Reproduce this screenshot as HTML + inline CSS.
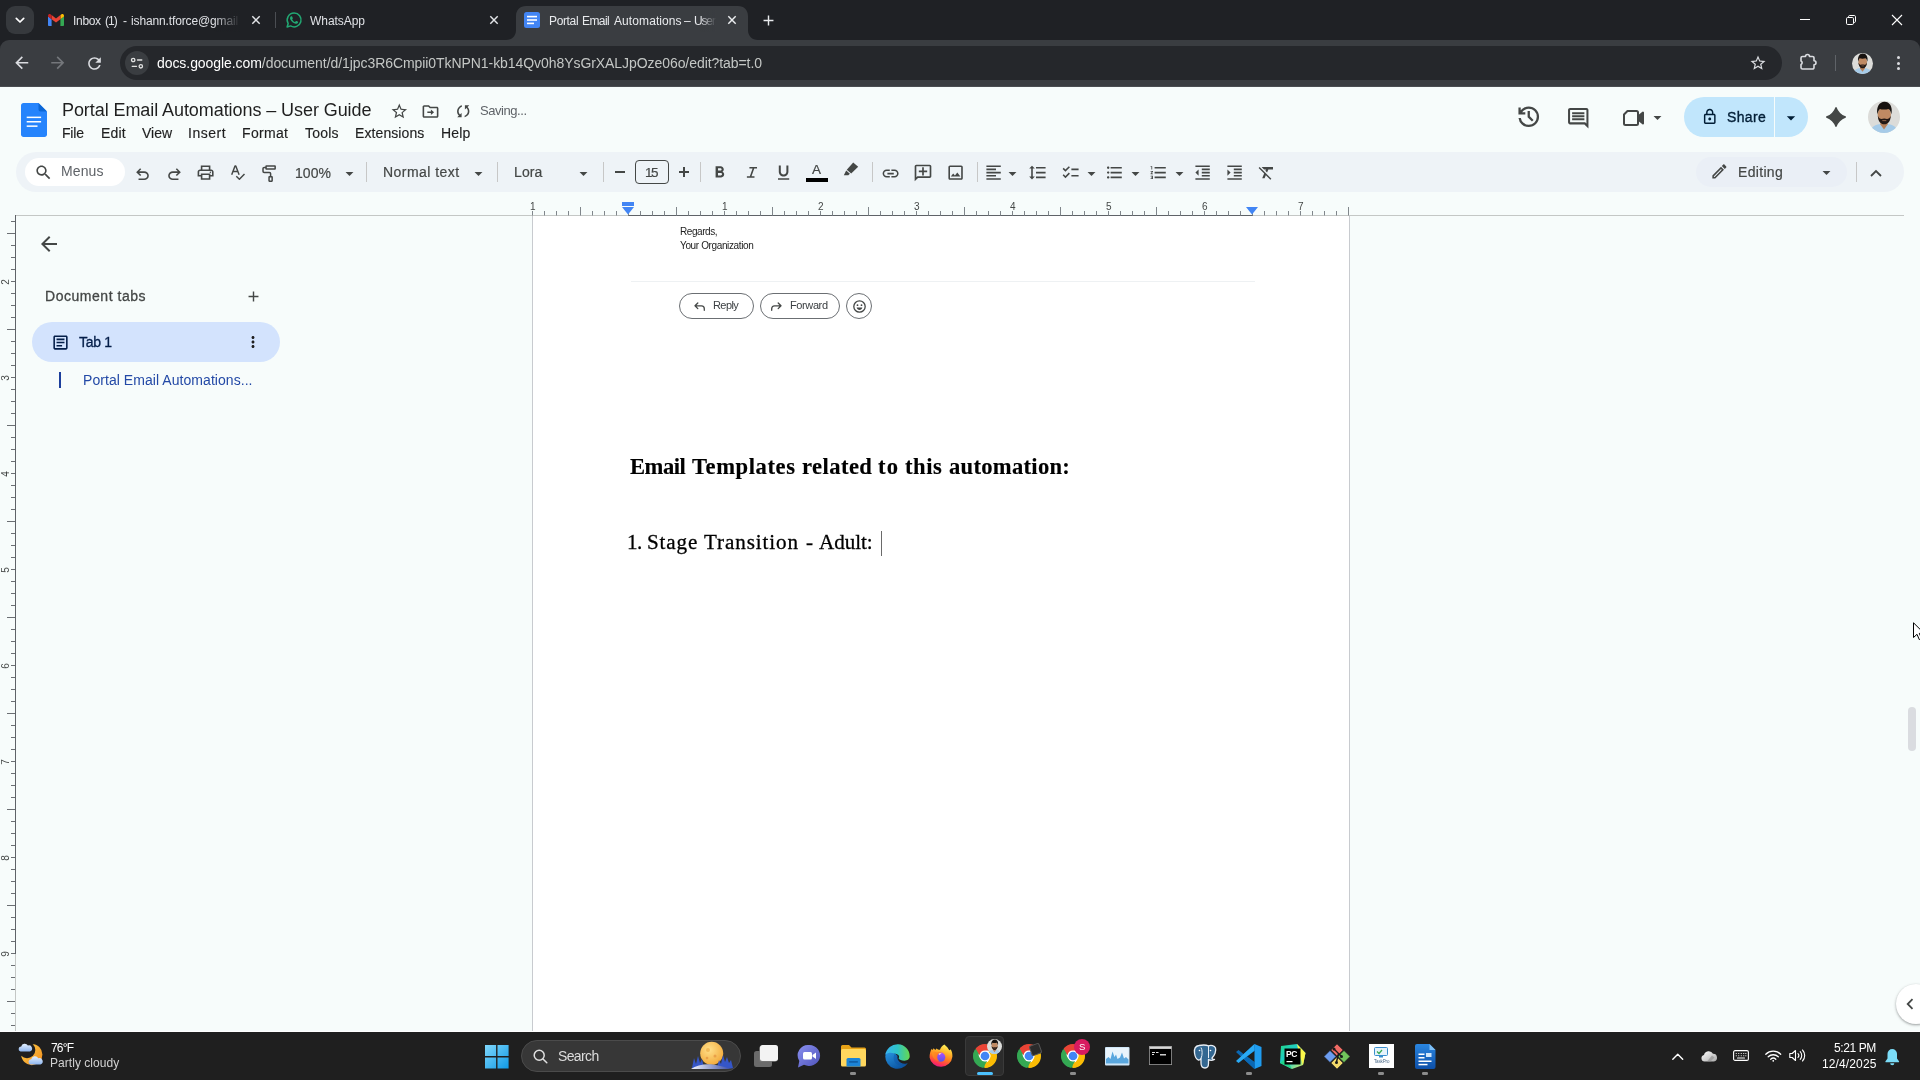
<!DOCTYPE html>
<html>
<head>
<meta charset="utf-8">
<title>Portal Email Automations – User Guide</title>
<style>
*{box-sizing:border-box;margin:0;padding:0}
html,body{width:1920px;height:1080px;overflow:hidden;background:#f7fcfb;font-family:"Liberation Sans",sans-serif;}
.abs{position:absolute}
svg{position:absolute;display:block;overflow:visible}
.t{position:absolute;white-space:nowrap;line-height:1;will-change:transform}
/* chrome */
#tabstrip{left:0;top:0;width:1920px;height:40px;background:#1f2125}
#cbar{left:0;top:40px;width:1920px;height:46px;background:#3a3d41}
#cline{left:0;top:86px;width:1920px;height:1px;background:#4a4d51}
#omni{left:120px;top:46px;width:1662px;height:34px;border-radius:17px;background:#25272b}
/* docs */
#docsbg{left:0;top:87px;width:1920px;height:945px;background:#f7fcfb}
#pill{left:15.5px;top:152px;width:1888.5px;height:40px;border-radius:20px;background:#eef3f7}
#menus{left:25px;top:158px;width:100px;height:28px;border-radius:14px;background:#fff}
.mi{color:#1f1f1f;font-size:15px;top:126px}
.tb{fill:#444746}
.sep{position:absolute;top:162px;width:1px;height:20px;background:#c7c7c7}
.tt{color:#444746;font-size:15px;top:165px}
/* page */
#page{left:532px;top:216px;width:818px;height:816px;background:#fff;border-left:1px solid #c8cbcf;border-right:1px solid #c8cbcf}
/* taskbar */
#taskbar{left:0;top:1032px;width:1920px;height:48px;background:#1f1f1f}
</style>
</head>
<body>
<!-- ===== Chrome frame ===== -->
<div id="tabstrip" class="abs"></div>
<div id="cbar" class="abs"></div>
<div id="cline" class="abs"></div>
<div id="omni" class="abs"></div>
<div class="abs" style="left:0px;top:40px;width:10px;height:10px;background:#1f2125;"></div>
<div class="abs" style="left:0px;top:40px;width:20px;height:20px;background:#3a3d41;border-radius:9px 0 0 0"></div>
<div class="abs" style="left:1910px;top:40px;width:10px;height:10px;background:#1f2125;"></div>
<div class="abs" style="left:1900px;top:40px;width:20px;height:20px;background:#3a3d41;border-radius:0 9px 0 0"></div>
<div class="abs" style="left:6px;top:6px;width:28px;height:28px;background:#36393d;border-radius:9px"></div>
<svg style="left:14px;top:14px" width="12" height="12" viewBox="0 0 12 12" fill="none" stroke="#fff" stroke-width="1.7" stroke-linecap="round" stroke-linejoin="round"><path d="M2.3 4.3 6 8 9.7 4.3"/></svg>
<svg style="left:48px;top:14px" width="16" height="12" viewBox="0 0 16 12">
<path d="M0 2.2v8.7c0 .6.5 1.1 1.1 1.1h2.5V5.3z" fill="#4285f4"/>
<path d="M12.4 12h2.5c.6 0 1.1-.5 1.1-1.100V2.200l-3.600 3.100z" fill="#34a853"/>
<path d="M12.4 1.100v4.200l3.600-2.700V1.700c0-1.400-1.600-2.200-2.700-1.300z" fill="#fbbc04"/>
<path d="M3.600 5.300V1.100L8 4.400l4.400-3.300v4.200L8 8.600z" fill="#ea4335"/>
<path d="M0 1.700v.9l3.600 2.700V1.100L2.700.4C1.600-.5 0 .3 0 1.700z" fill="#c5221f"/>
</svg>
<span class="t" style="left:72.90px;top:14.54px;font-size:12px;color:#dfe1e5;letter-spacing:-0.315px;">Inbox</span>
<span class="t" style="left:105.20px;top:14.54px;font-size:12px;color:#dfe1e5;letter-spacing:-0.936px;">(1)</span>
<span class="t" style="left:123.20px;top:14.54px;font-size:12px;color:#dfe1e5;">-</span>
<span class="t" style="left:130.50px;top:14.54px;font-size:12px;color:#dfe1e5;letter-spacing:-0.132px;">ishann.tforce@gmail</span>
<div class="abs" style="left:214px;top:10px;width:26px;height:22px;background:linear-gradient(90deg,rgba(31,33,37,0),#1f2125)"></div>
<svg style="left:252px;top:16.3px" width="8" height="8" viewBox="0 0 8 8" fill="none" stroke="#e3e5e8" stroke-width="1.450"><path d="M.3.300 7.700 7.700M7.700.300.300 7.700"/></svg>
<div class="abs" style="left:275px;top:12px;width:1px;height:16px;background:#4b4e53;"></div>
<svg style="left:286px;top:12px" width="16" height="16" viewBox="0 0 16 16">
<path d="M8.100 1.100A6.900 6.900 0 0 0 2.200 11.600L1.100 15 4.600 13.900A6.900 6.900 0 1 0 8.100 1.100Z" fill="none" stroke="#22a873" stroke-width="1.500" stroke-linejoin="round"/>
<path d="M6.100 4.600c-.15-.33-.3-.34-.45-.34h-.38c-.13 0-.35.050-.53.250-.18.200-.7.680-.7 1.660s.71 1.930.81 2.060c.1.130 1.380 2.200 3.400 3 1.680.66 2.020.53 2.390.5.360-.040 1.170-.480 1.340-.940.160-.460.160-.860.110-.940-.050-.080-.180-.130-.380-.230s-1.170-.580-1.350-.640c-.18-.070-.310-.100-.440.100s-.510.640-.620.770c-.110.130-.230.150-.430.050s-.840-.310-1.590-.980c-.590-.520-.990-1.170-1.100-1.370-.110-.2-.010-.3.090-.400.090-.090.200-.230.300-.350.100-.120.130-.2.200-.330.070-.130.030-.250-.020-.350-.050-.100-.430-1.100-.610-1.500z" fill="#22a873"/>
</svg>
<span class="t" style="left:310.00px;top:14.54px;font-size:12px;color:#dfe1e5;letter-spacing:-0.051px;">WhatsApp</span>
<svg style="left:490px;top:16.3px" width="8" height="8" viewBox="0 0 8 8" fill="none" stroke="#e3e5e8" stroke-width="1.450"><path d="M.3.300 7.700 7.700M7.700.300.300 7.700"/></svg>
<svg style="left:506px;top:6px" width="252" height="34" viewBox="0 0 252 34"><path d="M0 34 C6 34 10 30 10 24 L10 10 C10 4 14 0 20 0 L232 0 C238 0 242 4 242 10 L242 24 C242 30 246 34 252 34 Z" fill="#3a3d41"/></svg>
<svg style="left:524px;top:12px" width="16" height="16" viewBox="0 0 16 16"><rect width="16" height="16" rx="2.500" fill="#4285f4"/><rect x="3" y="3.800" width="10" height="1.600" fill="#fff"/><rect x="3" y="7.200" width="10" height="1.600" fill="#fff"/><rect x="3" y="10.600" width="7" height="1.600" fill="#fff"/></svg>
<span class="t" style="left:548.70px;top:14.54px;font-size:12px;color:#e8eaed;letter-spacing:-0.352px;">Portal</span>
<span class="t" style="left:582.10px;top:14.54px;font-size:12px;color:#e8eaed;letter-spacing:-0.579px;">Email</span>
<span class="t" style="left:613.50px;top:14.54px;font-size:12px;color:#e8eaed;letter-spacing:0.090px;">Automations</span>
<span class="t" style="left:684.40px;top:14.54px;font-size:12px;color:#e8eaed;">–</span>
<span class="t" style="left:694.40px;top:14.54px;font-size:12px;color:#e8eaed;letter-spacing:-1.148px;">User</span>
<div class="abs" style="left:700px;top:10px;width:20px;height:22px;background:linear-gradient(90deg,rgba(58,61,65,0),#3a3d41 80%)"></div>
<div class="abs" style="left:720px;top:10px;width:20px;height:22px;background:#3a3d41;"></div>
<svg style="left:728px;top:16.3px" width="8" height="8" viewBox="0 0 8 8" fill="none" stroke="#eceef0" stroke-width="1.450"><path d="M.3.300 7.700 7.700M7.700.300.300 7.700"/></svg>
<svg style="left:759.50px;top:11.50px" width="17" height="17" viewBox="0 0 24 24" fill="#e8eaed" ><path d="M19 13h-6v6h-2v-6H5v-2h6V5h2v6h6v2z"/></svg>
<div class="abs" style="left:1800px;top:19px;width:10px;height:1px;background:#fff;"></div>
<svg style="left:1846px;top:15px" width="10" height="10" viewBox="0 0 10 10" fill="none" stroke="#fff" stroke-width="1"><rect x=".5" y="2.500" width="7" height="7" rx="1.200"/><path d="M2.500 2.500V1.700C2.500 1 3 .5 3.700.5H8.300C9 .5 9.500 1 9.500 1.700V6.300C9.500 7 9 7.500 8.300 7.500H7.500"/></svg>
<svg style="left:1892px;top:15px" width="10" height="10" viewBox="0 0 10 10" fill="none" stroke="#fff" stroke-width="1.100"><path d="M0 0 10 10M10 0 0 10"/></svg>
<svg style="left:12.25px;top:53.25px" width="19.5" height="19.5" viewBox="0 0 24 24" fill="#dadce0" ><path d="M20 11H7.83l5.59-5.59L12 4l-8 8 8 8 1.41-1.41L7.83 13H20v-2z"/></svg>
<svg style="left:48.25px;top:53.25px" width="19.5" height="19.5" viewBox="0 0 24 24" fill="#74777b" ><path d="M12 4l-1.41 1.41L16.17 11H4v2h12.17l-5.58 5.59L12 20l8-8z"/></svg>
<svg style="left:84.50px;top:53.50px" width="19" height="19" viewBox="0 0 24 24" fill="#dadce0" ><path d="M17.65 6.35C16.2 4.9 14.21 4 12 4c-4.42 0-7.99 3.58-7.99 8s3.57 8 7.99 8c3.73 0 6.84-2.55 7.73-6h-2.08c-.82 2.33-3.04 4-5.65 4-3.31 0-6-2.69-6-6s2.69-6 6-6c1.66 0 3.14.69 4.22 1.78L13 11h7V4l-2.35 2.35z"/></svg>
<div class="abs" style="left:125px;top:51px;width:24px;height:24px;background:#3a3d41;border-radius:12px"></div>
<svg style="left:130px;top:56px" width="14" height="14" viewBox="0 0 14 14" fill="none" stroke="#e3e3e3" stroke-width="1.300" stroke-linecap="round"><circle cx="3.200" cy="4" r="1.700"/><path d="M7.500 4h4.300"/><circle cx="10.800" cy="10.300" r="1.700"/><path d="M2.200 10.300h4.300"/></svg>
<span class="t" style="left:157.00px;top:56.15px;font-size:14px;color:#c4c7c5;letter-spacing:-0.066px;"><span style="color:#fff">docs.google.com</span>/document/d/1jpc3R6Cmpii0TkNPN1-kb14Qv0h8YsGrXALJpOze06o/edit?tab=t.0</span>
<svg style="left:1748.70px;top:53.60px" width="18" height="18" viewBox="0 0 24 24" fill="#dadce0" ><path d="M22 9.24l-7.19-.62L12 2 9.19 8.63 2 9.24l5.46 4.73L5.82 21 12 17.27 18.18 21l-1.63-7.03L22 9.24zM12 15.4l-3.76 2.27 1-4.28-3.32-2.88 4.38-.38L12 6.1l1.71 4.04 4.38.38-3.32 2.88 1 4.28L12 15.4z"/></svg>
<svg style="left:1800.300px;top:53.300px" width="17" height="17" viewBox="0 0 17 17" fill="none" stroke="#dadce0" stroke-width="1.600" stroke-linejoin="round"><path d="M2.500 3.500H5.500A2 2 0 0 1 9.500 3.500H12.500A1.500 1.500 0 0 1 14 5V7.750A2 2 0 0 1 14 11.750V14.500A1.500 1.500 0 0 1 12.500 16H2.500A1.500 1.500 0 0 1 1 14.500V11.500A1.900 1.900 0 0 0 1 8V5A1.500 1.500 0 0 1 2.500 3.500Z"/></svg>
<div class="abs" style="left:1835px;top:55px;width:1px;height:16px;background:#5f6368;"></div>
<svg style="left:1851.5px;top:52.5px" width="21" height="21" viewBox="0 0 32 32"><defs><clipPath id="av1"><circle cx="16" cy="16" r="16"/></clipPath></defs><g clip-path="url(#av1)"><rect width="32" height="32" fill="#dcdcd9"/><path d="M2 32C2 26.500 7 24 11.500 23L16 27.500 20.500 23C25 24 30 26.500 30 32Z" fill="#a6cbe8"/><path d="M12.300 20H19.700V23.500L16 28.500 12.300 23.500Z" fill="#b5815c"/><ellipse cx="16.300" cy="13.800" rx="6.600" ry="8.200" fill="#c08a63"/><path d="M9.400 13.500C8 6 11.500 .8 16.500 .8S25 5.500 23.400 13.500C22.800 10.500 22 8.800 20.500 8 18 8.800 13.500 8.800 12 8 10.500 9 9.900 11 9.400 13.500Z" fill="#17120f"/><path d="M9.800 14.500C10 20.500 12.800 23.300 16.300 23.300S22.600 20.500 22.800 14.500C21.800 17.200 20.500 18 19 18 17.500 17.200 15 17.200 13.600 18 12 18 10.800 17.200 9.800 14.500Z" fill="#231915"/><path d="M14.300 19.600H18.300" stroke="#a87455" stroke-width=".8"/></g></svg>
<div class="abs" style="left:1896.500px;top:56.1px;width:3px;height:3px;border-radius:50%;background:#dadce0"></div>
<div class="abs" style="left:1896.500px;top:61.5px;width:3px;height:3px;border-radius:50%;background:#dadce0"></div>
<div class="abs" style="left:1896.500px;top:66.9px;width:3px;height:3px;border-radius:50%;background:#dadce0"></div>
<!-- ===== Docs ===== -->
<div id="docsbg" class="abs"></div>
<svg style="left:21px;top:103px" width="26" height="34" viewBox="0 0 26 34">
<path d="M2.500 0H17.500L26 8.500V31.500C26 32.900 24.900 34 23.500 34H2.500C1.100 34 0 32.900 0 31.500V2.500C0 1.100 1.100 0 2.500 0Z" fill="#2684fc"/>
<path d="M17.500 0 26 8.500H19.500C18.400 8.500 17.500 7.600 17.500 6.500Z" fill="#0c67d6"/>
<rect x="5.700" y="13.600" width="14.400" height="1.500" fill="#fff"/><rect x="5.700" y="18" width="14.400" height="1.500" fill="#fff"/><rect x="5.700" y="22.400" width="10.800" height="1.500" fill="#fff"/>
</svg>
<span class="t" style="left:61.50px;top:100.56px;font-size:18px;color:#1f1f1f;letter-spacing:-0.074px;">Portal Email Automations – User Guide</span>
<svg style="left:389.70px;top:101.70px" width="18.6" height="18.6" viewBox="0 0 24 24" fill="#444746" ><path d="M22 9.24l-7.19-.62L12 2 9.19 8.63 2 9.24l5.46 4.73L5.82 21 12 17.27 18.18 21l-1.63-7.03L22 9.24zM12 15.4l-3.76 2.27 1-4.28-3.32-2.88 4.38-.38L12 6.1l1.71 4.04 4.38.38-3.32 2.88 1 4.28L12 15.4z"/></svg>
<svg style="left:421.20px;top:101.50px" width="19" height="19" viewBox="0 0 24 24" fill="#444746" ><path d="M20 6h-8l-2-2H4c-1.1 0-2 .9-2 2v12c0 1.1.9 2 2 2h16c1.1 0 2-.9 2-2V8c0-1.1-.9-2-2-2zm0 12H4V6h5.17l2 2H20v10zm-7.5-1.5l4-3.5-4-3.5V12H8v2h4.5v2.5z"/></svg>
<svg style="left:453.75px;top:101.55px" width="18.5" height="18.5" viewBox="0 0 24 24" fill="#444746" transform="rotate(45)"><path d="M12 4V1L8 5l4 4V6c3.31 0 6 2.69 6 6 0 1.01-.25 1.97-.7 2.8l1.46 1.46C19.54 15.03 20 13.57 20 12c0-4.42-3.58-8-8-8zm0 14c-3.31 0-6-2.69-6-6 0-1.01.25-1.97.7-2.8L5.24 7.74C4.46 8.97 4 10.43 4 12c0 4.42 3.58 8 8 8v3l4-4-4-4v3z"/></svg>
<span class="t" style="left:480.00px;top:104.30px;font-size:13px;color:#5f6368;letter-spacing:-0.449px;">Saving...</span>
<span class="t" style="left:62.00px;top:125.85px;font-size:14px;color:#1f1f1f;letter-spacing:-0.188px;-webkit-text-stroke:.15px #1f1f1f;">File</span>
<span class="t" style="left:101.00px;top:125.85px;font-size:14px;color:#1f1f1f;letter-spacing:0.192px;-webkit-text-stroke:.15px #1f1f1f;">Edit</span>
<span class="t" style="left:142.00px;top:125.85px;font-size:14px;color:#1f1f1f;letter-spacing:-0.031px;-webkit-text-stroke:.15px #1f1f1f;">View</span>
<span class="t" style="left:188.30px;top:125.85px;font-size:14px;color:#1f1f1f;letter-spacing:0.537px;-webkit-text-stroke:.15px #1f1f1f;">Insert</span>
<span class="t" style="left:242.30px;top:125.85px;font-size:14px;color:#1f1f1f;letter-spacing:0.331px;-webkit-text-stroke:.15px #1f1f1f;">Format</span>
<span class="t" style="left:304.70px;top:125.85px;font-size:14px;color:#1f1f1f;letter-spacing:0.228px;-webkit-text-stroke:.15px #1f1f1f;">Tools</span>
<span class="t" style="left:355.00px;top:125.85px;font-size:14px;color:#1f1f1f;letter-spacing:0.091px;-webkit-text-stroke:.15px #1f1f1f;">Extensions</span>
<span class="t" style="left:441.00px;top:125.85px;font-size:14px;color:#1f1f1f;letter-spacing:0.168px;-webkit-text-stroke:.15px #1f1f1f;">Help</span>
<svg style="left:1515.15px;top:103.25px" width="27.5" height="27.5" viewBox="0 -960 960 960" fill="#444746"><path d="M480-120q-138 0-240.500-91.500T122-440h82q14 104 92.500 172T480-200q117 0 198.500-81.500T760-480q0-117-81.500-198.500T480-760q-69 0-129 32t-101 88h110v80H120v-240h80v94q51-64 124.500-99T480-840q75 0 140.500 28.500t114 77q48.500 48.500 77 114T840-480q0 75-28.500 140.500t-77 114q-48.500 48.500-114 77T480-120Zm112-192L440-464v-216h80v184l128 128-56 56Z"/></svg>
<svg style="left:1565.75px;top:105.55px" width="24.5" height="24.5" viewBox="0 0 24 24" fill="#444746" ><path d="M21.99 4c0-1.1-.89-2-1.99-2H4c-1.1 0-2 .9-2 2v12c0 1.1.9 2 2 2h14l4 4-.01-18zM20 4v13.17L18.83 16H4V4h16zM6 12h12v2H6zm0-3h12v2H6zm0-3h12v2H6z"/></svg>
<svg style="left:1622.500px;top:110px" width="21" height="16" viewBox="0 0 21 16" fill="none" stroke="#444746" stroke-width="2" stroke-linejoin="round"><path d="M4.500 1H13.500A1.500 1.500 0 0 1 15 2.500V13.500A1.500 1.500 0 0 1 13.500 15H2.500A1.500 1.500 0 0 1 1 13.500V4.500Z"/><path d="M15 6.500 20 2.500V13.500L15 9.500" fill="#444746"/></svg>
<svg style="left:1647.50px;top:107.70px" width="19" height="19" viewBox="0 0 24 24" fill="#444746" ><path d="M7 10l5 5 5-5z"/></svg>
<div class="abs" style="left:1684px;top:97px;width:124.2px;height:40px;background:#c1e6fc;border-radius:20px"></div>
<div class="abs" style="left:1774px;top:97px;width:1px;height:40px;background:#f7fcfb;"></div>
<svg style="left:1701.25px;top:107.85px" width="17.5" height="17.5" viewBox="0 0 24 24" fill="#001d35" ><path d="M18 8h-1V6c0-2.76-2.24-5-5-5S7 3.24 7 6v2H6c-1.1 0-2 .9-2 2v10c0 1.1.9 2 2 2h12c1.1 0 2-.9 2-2V10c0-1.1-.9-2-2-2zM9 6c0-1.66 1.34-3 3-3s3 1.34 3 3v2H9V6zm9 14H6V10h12v10zm-6-3c1.1 0 2-.9 2-2s-.9-2-2-2-2 .9-2 2 .9 2 2 2z"/></svg>
<span class="t" style="left:1727.00px;top:109.85px;font-size:14px;color:#001d35;letter-spacing:0.360px;-webkit-text-stroke:.35px #001d35;">Share</span>
<svg style="left:1781.00px;top:107.80px" width="20" height="20" viewBox="0 0 24 24" fill="#001d35" ><path d="M7 10l5 5 5-5z"/></svg>
<svg style="left:1826px;top:107px" width="20" height="20" viewBox="0 0 20 20"><path d="M10 .7Q12.500 7.500 19.300 10 12.500 12.500 10 19.300 7.500 12.500 .7 10 7.500 7.500 10 .7Z" fill="#444746" stroke="#444746" stroke-width="1.400" stroke-linejoin="round"/></svg>
<svg style="left:1868px;top:101px" width="32" height="32" viewBox="0 0 32 32"><defs><clipPath id="av2"><circle cx="16" cy="16" r="16"/></clipPath></defs><g clip-path="url(#av2)"><rect width="32" height="32" fill="#dcdcd9"/><path d="M2 32C2 26.500 7 24 11.500 23L16 27.500 20.500 23C25 24 30 26.500 30 32Z" fill="#a6cbe8"/><path d="M12.300 20H19.700V23.500L16 28.500 12.300 23.500Z" fill="#b5815c"/><ellipse cx="16.300" cy="13.800" rx="6.600" ry="8.200" fill="#c08a63"/><path d="M9.400 13.500C8 6 11.500 .8 16.500 .8S25 5.500 23.400 13.500C22.800 10.500 22 8.800 20.500 8 18 8.800 13.500 8.800 12 8 10.500 9 9.900 11 9.400 13.500Z" fill="#17120f"/><path d="M9.800 14.500C10 20.500 12.800 23.300 16.300 23.300S22.600 20.500 22.800 14.500C21.800 17.200 20.500 18 19 18 17.500 17.200 15 17.200 13.600 18 12 18 10.800 17.200 9.800 14.500Z" fill="#231915"/><path d="M14.300 19.600H18.300" stroke="#a87455" stroke-width=".8"/></g></svg>
<div id="pill" class="abs"></div>
<div id="menus" class="abs"></div>
<svg style="left:33.80px;top:162.80px" width="19" height="19" viewBox="0 0 24 24" fill="#444746" ><path d="M15.5 14h-.79l-.28-.27C15.41 12.59 16 11.11 16 9.5 16 5.91 13.09 3 9.5 3S3 5.91 3 9.5 5.91 16 9.5 16c1.61 0 3.09-.59 4.23-1.57l.27.28v.79l5 4.99L20.49 19l-4.99-5zm-6 0C7.01 14 5 11.99 5 9.5S7.01 5 9.5 5 14 7.01 14 9.5 11.99 14 9.5 14z"/></svg>
<span class="t" style="left:61.30px;top:164.15px;font-size:14px;color:#5f6368;letter-spacing:0.092px;">Menus</span>
<svg style="left:132.50px;top:164.50px" width="19" height="19" viewBox="0 -960 960 960" fill="#444746"><path d="M280-200v-80h284q63 0 109.500-40T720-420q0-60-46.500-100T564-560H312l104 104-56 56-200-200 200-200 56 56-104 104h252q97 0 166.500 63T800-420q0 94-69.500 157T564-200H280Z"/></svg>
<svg style="left:164.50px;top:164.50px" width="19" height="19" viewBox="0 -960 960 960" fill="#444746"><path d="M396-200q-97 0-166.500-63T160-420q0-94 69.500-157T396-640h252L544-744l56-56 200 200-200 200-56-56 104-104H396q-63 0-109.500 40T240-420q0 60 46.500 100T396-280h284v80H396Z"/></svg>
<svg style="left:196.40px;top:163.00px" width="19.2" height="19.2" viewBox="0 0 24 24" fill="#444746" ><path d="M19 8h-1V3H6v5H5c-1.66 0-3 1.34-3 3v6h4v4h12v-4h4v-6c0-1.66-1.34-3-3-3zM8 5h8v3H8V5zm8 14H8v-4h8v4zm2-4v-2H6v2H4v-4c0-.55.45-1 1-1h14c.55 0 1 .45 1 1v4h-2zm0-4.5a1 1 0 1 0 0 2 1 1 0 0 0 0-2z"/></svg>
<svg style="left:230px;top:164px" width="16" height="17" viewBox="0 0 16 17" fill="none" stroke="#444746" stroke-width="1.450" stroke-linejoin="round"><path d="M1.700 10.700 5 1.900H5.800L9.100 10.700M2.900 7.500H7.900"/><path d="M6.300 12.300 9.400 15.300 14.500 10.100"/></svg>
<svg style="left:261px;top:164px" width="16" height="19" viewBox="0 0 16 19" fill="none" stroke="#444746" stroke-width="1.500"><rect x="5.050" y="1.950" width="9.100" height="3" rx=".3"/><path d="M5.050 3.450H3.200Q2 3.450 2 4.600V7.200Q2 8.400 3.200 8.400H8.400Q9.600 8.400 9.600 9.600V12.100"/><rect x="8.050" y="12.850" width="3.100" height="4.300" rx=".3"/></svg>
<span class="t" style="left:295.30px;top:165.65px;font-size:14px;color:#444746;letter-spacing:0.062px;-webkit-text-stroke:.2px #444746;">100%</span>
<svg style="left:339.50px;top:163.50px" width="19" height="19" viewBox="0 0 24 24" fill="#444746" ><path d="M7 10l5 5 5-5z"/></svg>
<div class="sep" style="left:366px"></div>
<div class="sep" style="left:497px"></div>
<div class="sep" style="left:603px"></div>
<div class="sep" style="left:700px"></div>
<div class="sep" style="left:871.5px"></div>
<div class="sep" style="left:976.5px"></div>
<div class="sep" style="left:1856px"></div>
<span class="t" style="left:382.50px;top:165.35px;font-size:14px;color:#444746;letter-spacing:0.462px;-webkit-text-stroke:.2px #444746;">Normal text</span>
<svg style="left:468.50px;top:163.50px" width="19" height="19" viewBox="0 0 24 24" fill="#444746" ><path d="M7 10l5 5 5-5z"/></svg>
<span class="t" style="left:513.70px;top:165.35px;font-size:14px;color:#444746;letter-spacing:0.090px;-webkit-text-stroke:.2px #444746;">Lora</span>
<svg style="left:574.20px;top:163.50px" width="19" height="19" viewBox="0 0 24 24" fill="#444746" ><path d="M7 10l5 5 5-5z"/></svg>
<div class="abs" style="left:615px;top:171.4px;width:10px;height:1.6px;background:#444746;"></div>
<div class="abs" style="left:635px;top:160px;width:34px;height:24px;background:transparent;border:1px solid #444746;border-radius:4px"></div>
<span class="t" style="left:645.20px;top:165.77px;font-size:13.5px;color:#444746;letter-spacing:-1.431px;-webkit-text-stroke:.2px #444746;">15</span>
<div class="abs" style="left:679px;top:171.4px;width:10.4px;height:1.6px;background:#444746;"></div>
<div class="abs" style="left:683.4px;top:167px;width:1.6px;height:10.4px;background:#444746;"></div>
<svg style="left:710.40px;top:163.00px" width="19.2" height="19.2" viewBox="0 0 24 24" fill="#444746" ><path d="M15.6 10.79c.97-.67 1.65-1.77 1.65-2.79 0-2.26-1.75-4-4-4H7v14h7.04c2.09 0 3.71-1.7 3.71-3.79 0-1.52-.86-2.82-2.15-3.42zM10 6.5h3c.83 0 1.5.67 1.5 1.5s-.67 1.5-1.5 1.5h-3v-3zm3.5 9H10v-3h3.5c.83 0 1.5.67 1.5 1.5s-.67 1.5-1.5 1.5z"/></svg>
<svg style="left:742.95px;top:163.10px" width="18.7" height="18.7" viewBox="0 -960 960 960" fill="#444746"><path d="M330-760H720V-680H578L438-280H590V-200H200V-280H352L492-680H330Z"/></svg>
<svg style="left:774.40px;top:163.40px" width="19.2" height="19.2" viewBox="0 0 24 24" fill="#444746" ><path d="M12 17c3.31 0 6-2.69 6-6V3h-2.5v8c0 1.93-1.57 3.5-3.5 3.5S8.5 12.93 8.5 11V3H6v8c0 3.31 2.69 6 6 6zm-7 2v2h14v-2H5z"/></svg>
<span class="t" style="left:812.30px;top:163.27px;font-size:13.5px;color:#444746;letter-spacing:0.000px;-webkit-text-stroke:.2px #444746;">A</span>
<div class="abs" style="left:806.2px;top:178px;width:21.8px;height:3.8px;background:#000;"></div>
<svg style="left:843px;top:162px" width="16" height="14" viewBox="0 0 16 14" fill="#444746"><path d="M10.200.6 15.200 4.700 8.200 11.400 3.800 7.700Z"/><path d="M3.200 8.500 6.900 11.700 5.300 13.200H.8Z"/></svg>
<svg style="left:881.40px;top:163.60px" width="19.2" height="19.2" viewBox="0 0 24 24" fill="#444746" ><path d="M3.9 12c0-1.71 1.39-3.1 3.1-3.1h4V7H7c-2.76 0-5 2.24-5 5s2.24 5 5 5h4v-1.9H7c-1.71 0-3.1-1.39-3.1-3.1zM8 13h8v-2H8v2zm9-6h-4v1.9h4c1.71 0 3.1 1.39 3.1 3.1s-1.39 3.1-3.1 3.1h-4V17h4c2.76 0 5-2.24 5-5s-2.24-5-5-5z"/></svg>
<svg style="left:913.00px;top:163.00px" width="20" height="20" viewBox="0 0 24 24" fill="#444746" transform="scale(-1 1)"><path d="M22 4c0-1.1-.9-2-2-2H4c-1.1 0-2 .9-2 2v12c0 1.1.9 2 2 2h14l4 4V4zm-2 13.17L18.83 16H4V4h16v13.17zM13 5h-2v4H7v2h4v4h2v-4h4V9h-4z"/></svg>
<svg style="left:946.40px;top:163.40px" width="19.2" height="19.2" viewBox="0 0 24 24" fill="#444746" ><path d="M19 5v14H5V5h14m0-2H5c-1.1 0-2 .9-2 2v14c0 1.1.9 2 2 2h14c1.1 0 2-.9 2-2V5c0-1.1-.9-2-2-2zm-4.86 8.86l-3 3.87L9 13.14 6 17h12l-3.86-5.14z"/></svg>
<svg style="left:984.40px;top:163.40px" width="19.2" height="19.2" viewBox="0 0 24 24" fill="#444746" ><path d="M15 15H3v2h12v-2zm0-8H3v2h12V7zM3 13h18v-2H3v2zm0 8h18v-2H3v2zM3 3v2h18V3H3z"/></svg>
<svg style="left:1002.50px;top:163.50px" width="19" height="19" viewBox="0 0 24 24" fill="#444746" ><path d="M7 10l5 5 5-5z"/></svg>
<svg style="left:1028.40px;top:163.40px" width="19.2" height="19.2" viewBox="0 0 24 24" fill="#444746" ><path d="M6 7h2.5L5 3.5 1.5 7H4v10H1.5L5 20.5 8.5 17H6V7zm4-2v2h12V5H10zm0 14h12v-2H10v2zm0-6h12v-2H10v2z"/></svg>
<svg style="left:1061.40px;top:163.40px" width="19.2" height="19.2" viewBox="0 0 24 24" fill="#444746" ><path d="M22 7h-9v2h9V7zm0 8h-9v2h9v-2zM5.54 11L2 7.46l1.41-1.41 2.12 2.12 4.24-4.24 1.41 1.41L5.54 11zm0 8L2 15.46l1.41-1.41 2.12 2.12 4.24-4.24 1.41 1.41L5.54 19z"/></svg>
<svg style="left:1082.20px;top:163.50px" width="19" height="19" viewBox="0 0 24 24" fill="#444746" ><path d="M7 10l5 5 5-5z"/></svg>
<svg style="left:1105.20px;top:163.40px" width="19.2" height="19.2" viewBox="0 0 24 24" fill="#444746" ><path d="M4 10.5c-.83 0-1.5.67-1.5 1.5s.67 1.5 1.5 1.5 1.5-.67 1.5-1.5-.67-1.5-1.5-1.5zm0-6c-.83 0-1.5.67-1.5 1.5S3.17 7.5 4 7.5 5.5 6.83 5.5 6 4.83 4.5 4 4.5zm0 12c-.83 0-1.5.68-1.5 1.5s.68 1.5 1.5 1.5 1.5-.68 1.5-1.5-.67-1.5-1.5-1.5zM7 19h14v-2H7v2zm0-6h14v-2H7v2zm0-8v2h14V5H7z"/></svg>
<svg style="left:1125.90px;top:163.50px" width="19" height="19" viewBox="0 0 24 24" fill="#444746" ><path d="M7 10l5 5 5-5z"/></svg>
<svg style="left:1149.30px;top:163.40px" width="19.2" height="19.2" viewBox="0 0 24 24" fill="#444746" ><path d="M2 17h2v.5H3v1h1v.5H2v1h3v-4H2v1zm1-9h1V4H2v1h1v3zm-1 3h1.8L2 13.1v.9h3v-1H3.2L5 10.9V10H2v1zm5-6v2h14V5H7zm0 14h14v-2H7v2zm0-6h14v-2H7v2z"/></svg>
<svg style="left:1170.10px;top:163.50px" width="19" height="19" viewBox="0 0 24 24" fill="#444746" ><path d="M7 10l5 5 5-5z"/></svg>
<svg style="left:1193.40px;top:163.40px" width="19.2" height="19.2" viewBox="0 0 24 24" fill="#444746" ><path d="M11 17h10v-2H11v2zm-8-5l4 4V8l-4 4zm0 9h18v-2H3v2zM3 3v2h18V3H3zm8 6h10V7H11v2zm0 4h10v-2H11v2z"/></svg>
<svg style="left:1225.40px;top:163.40px" width="19.2" height="19.2" viewBox="0 0 24 24" fill="#444746" ><path d="M3 21h18v-2H3v2zM3 8v8l4-4-4-4zm8 9h10v-2H11v2zM3 3v2h18V3H3zm8 6h10V7H11v2zm0 4h10v-2H11v2z"/></svg>
<svg style="left:1257.00px;top:163.40px" width="19.2" height="19.2" viewBox="0 0 24 24" fill="#444746" ><path d="M3.27 5L2 6.27l6.97 6.97L6.5 19h3l1.57-3.66L16.73 21 18 19.73 3.55 5.27 3.27 5zM6 5v.18L8.82 8h2.4l-.72 1.68 2.1 2.1L14.21 8H20V5H6z"/></svg>
<div class="abs" style="left:1696px;top:157px;width:151px;height:30px;background:#eaeff6;border-radius:15px"></div>
<svg style="left:1709.60px;top:162.40px" width="18.8" height="18.8" viewBox="0 0 24 24" fill="#444746" ><path d="M14.06 9.02l.92.92L5.92 19H5v-.92l9.06-9.06M17.66 3c-.25 0-.51.1-.7.29l-1.83 1.83 3.75 3.75 1.83-1.83c.39-.39.39-1.02 0-1.41l-2.34-2.34c-.2-.2-.45-.29-.71-.29zm-3.6 3.19L3 17.25V21h3.75L17.81 9.94l-3.75-3.75z"/></svg>
<span class="t" style="left:1737.80px;top:165.15px;font-size:14px;color:#444746;letter-spacing:0.315px;-webkit-text-stroke:.2px #444746;">Editing</span>
<svg style="left:1816.50px;top:162.70px" width="19" height="19" viewBox="0 0 24 24" fill="#444746" ><path d="M7 10l5 5 5-5z"/></svg>
<svg style="left:1870px;top:169px" width="12" height="8" viewBox="0 0 12 8" fill="none" stroke="#444746" stroke-width="1.800"><path d="M1 7 6 2 11 7"/></svg>
<div class="abs" style="left:15px;top:215px;width:1889px;height:1px;background:#c4c7c5;"></div>
<div class="abs" style="left:628px;top:214.5px;width:624.5px;height:1.5px;background:#5f6368;"></div>
<svg style="left:0;top:0" width="1920" height="230" fill="#80868b"><rect x="532" y="211.0" width="1" height="4.5"/><rect x="544" y="211.0" width="1" height="4.5"/><rect x="556" y="211.0" width="1" height="4.5"/><rect x="568" y="211.0" width="1" height="4.5"/><rect x="580" y="207.0" width="1" height="8.5"/><rect x="592" y="211.0" width="1" height="4.5"/><rect x="604" y="211.0" width="1" height="4.5"/><rect x="616" y="211.0" width="1" height="4.5"/><rect x="628" y="211.0" width="1" height="4.5"/><rect x="640" y="211.0" width="1" height="4.5"/><rect x="652" y="211.0" width="1" height="4.5"/><rect x="664" y="211.0" width="1" height="4.5"/><rect x="676" y="207.0" width="1" height="8.5"/><rect x="688" y="211.0" width="1" height="4.5"/><rect x="700" y="211.0" width="1" height="4.5"/><rect x="712" y="211.0" width="1" height="4.5"/><rect x="724" y="211.0" width="1" height="4.5"/><rect x="736" y="211.0" width="1" height="4.5"/><rect x="748" y="211.0" width="1" height="4.5"/><rect x="760" y="211.0" width="1" height="4.5"/><rect x="772" y="207.0" width="1" height="8.5"/><rect x="784" y="211.0" width="1" height="4.5"/><rect x="796" y="211.0" width="1" height="4.5"/><rect x="808" y="211.0" width="1" height="4.5"/><rect x="820" y="211.0" width="1" height="4.5"/><rect x="832" y="211.0" width="1" height="4.5"/><rect x="844" y="211.0" width="1" height="4.5"/><rect x="856" y="211.0" width="1" height="4.5"/><rect x="868" y="207.0" width="1" height="8.5"/><rect x="880" y="211.0" width="1" height="4.5"/><rect x="892" y="211.0" width="1" height="4.5"/><rect x="904" y="211.0" width="1" height="4.5"/><rect x="916" y="211.0" width="1" height="4.5"/><rect x="928" y="211.0" width="1" height="4.5"/><rect x="940" y="211.0" width="1" height="4.5"/><rect x="952" y="211.0" width="1" height="4.5"/><rect x="964" y="207.0" width="1" height="8.5"/><rect x="976" y="211.0" width="1" height="4.5"/><rect x="988" y="211.0" width="1" height="4.5"/><rect x="1000" y="211.0" width="1" height="4.5"/><rect x="1012" y="211.0" width="1" height="4.5"/><rect x="1024" y="211.0" width="1" height="4.5"/><rect x="1036" y="211.0" width="1" height="4.5"/><rect x="1048" y="211.0" width="1" height="4.5"/><rect x="1060" y="207.0" width="1" height="8.5"/><rect x="1072" y="211.0" width="1" height="4.5"/><rect x="1084" y="211.0" width="1" height="4.5"/><rect x="1096" y="211.0" width="1" height="4.5"/><rect x="1108" y="211.0" width="1" height="4.5"/><rect x="1120" y="211.0" width="1" height="4.5"/><rect x="1132" y="211.0" width="1" height="4.5"/><rect x="1144" y="211.0" width="1" height="4.5"/><rect x="1156" y="207.0" width="1" height="8.5"/><rect x="1168" y="211.0" width="1" height="4.5"/><rect x="1180" y="211.0" width="1" height="4.5"/><rect x="1192" y="211.0" width="1" height="4.5"/><rect x="1204" y="211.0" width="1" height="4.5"/><rect x="1216" y="211.0" width="1" height="4.5"/><rect x="1228" y="211.0" width="1" height="4.5"/><rect x="1240" y="211.0" width="1" height="4.5"/><rect x="1252" y="207.0" width="1" height="8.5"/><rect x="1264" y="211.0" width="1" height="4.5"/><rect x="1276" y="211.0" width="1" height="4.5"/><rect x="1288" y="211.0" width="1" height="4.5"/><rect x="1300" y="211.0" width="1" height="4.5"/><rect x="1312" y="211.0" width="1" height="4.5"/><rect x="1324" y="211.0" width="1" height="4.5"/><rect x="1336" y="211.0" width="1" height="4.5"/><rect x="1348" y="207.0" width="1" height="8.5"/></svg>
<span class="t" style="left:529.70px;top:201.53px;font-size:10px;color:#444746;">1</span>
<span class="t" style="left:721.70px;top:201.53px;font-size:10px;color:#444746;">1</span>
<span class="t" style="left:817.70px;top:201.53px;font-size:10px;color:#444746;">2</span>
<span class="t" style="left:913.70px;top:201.53px;font-size:10px;color:#444746;">3</span>
<span class="t" style="left:1009.70px;top:201.53px;font-size:10px;color:#444746;">4</span>
<span class="t" style="left:1105.70px;top:201.53px;font-size:10px;color:#444746;">5</span>
<span class="t" style="left:1201.70px;top:201.53px;font-size:10px;color:#444746;">6</span>
<span class="t" style="left:1297.70px;top:201.53px;font-size:10px;color:#444746;">7</span>
<svg style="left:622px;top:202px" width="12" height="13" viewBox="0 0 12 13" fill="#4285f4"><rect x="0" y="0" width="12" height="4"/><path d="M0 5H12L6 12.500Z"/></svg>
<svg style="left:1246px;top:207px" width="12" height="8" viewBox="0 0 12 8" fill="#4285f4"><path d="M0 0H12L6 7.500Z"/></svg>
<div class="abs" style="left:15px;top:215px;width:1px;height:738.5px;background:#5f6368;"></div>
<div class="abs" style="left:15px;top:953.5px;width:1px;height:77.5px;background:#c4c7c5;"></div>
<svg style="left:0;top:0" width="20" height="1080" fill="#6b6f73"><rect x="11" y="221" width="4" height="1"/><rect x="7" y="233" width="8" height="1"/><rect x="11" y="245" width="4" height="1"/><rect x="11" y="257" width="4" height="1"/><rect x="11" y="269" width="4" height="1"/><rect x="11" y="281" width="4" height="1"/><rect x="11" y="293" width="4" height="1"/><rect x="11" y="305" width="4" height="1"/><rect x="11" y="317" width="4" height="1"/><rect x="7" y="329" width="8" height="1"/><rect x="11" y="341" width="4" height="1"/><rect x="11" y="353" width="4" height="1"/><rect x="11" y="365" width="4" height="1"/><rect x="11" y="377" width="4" height="1"/><rect x="11" y="389" width="4" height="1"/><rect x="11" y="401" width="4" height="1"/><rect x="11" y="413" width="4" height="1"/><rect x="7" y="425" width="8" height="1"/><rect x="11" y="437" width="4" height="1"/><rect x="11" y="449" width="4" height="1"/><rect x="11" y="461" width="4" height="1"/><rect x="11" y="473" width="4" height="1"/><rect x="11" y="485" width="4" height="1"/><rect x="11" y="497" width="4" height="1"/><rect x="11" y="509" width="4" height="1"/><rect x="7" y="521" width="8" height="1"/><rect x="11" y="533" width="4" height="1"/><rect x="11" y="545" width="4" height="1"/><rect x="11" y="557" width="4" height="1"/><rect x="11" y="569" width="4" height="1"/><rect x="11" y="581" width="4" height="1"/><rect x="11" y="593" width="4" height="1"/><rect x="11" y="605" width="4" height="1"/><rect x="7" y="617" width="8" height="1"/><rect x="11" y="629" width="4" height="1"/><rect x="11" y="641" width="4" height="1"/><rect x="11" y="653" width="4" height="1"/><rect x="11" y="665" width="4" height="1"/><rect x="11" y="677" width="4" height="1"/><rect x="11" y="689" width="4" height="1"/><rect x="11" y="701" width="4" height="1"/><rect x="7" y="713" width="8" height="1"/><rect x="11" y="725" width="4" height="1"/><rect x="11" y="737" width="4" height="1"/><rect x="11" y="749" width="4" height="1"/><rect x="11" y="761" width="4" height="1"/><rect x="11" y="773" width="4" height="1"/><rect x="11" y="785" width="4" height="1"/><rect x="11" y="797" width="4" height="1"/><rect x="7" y="809" width="8" height="1"/><rect x="11" y="821" width="4" height="1"/><rect x="11" y="833" width="4" height="1"/><rect x="11" y="845" width="4" height="1"/><rect x="11" y="857" width="4" height="1"/><rect x="11" y="869" width="4" height="1"/><rect x="11" y="881" width="4" height="1"/><rect x="11" y="893" width="4" height="1"/><rect x="7" y="905" width="8" height="1"/><rect x="11" y="917" width="4" height="1"/><rect x="11" y="929" width="4" height="1"/><rect x="11" y="941" width="4" height="1"/><rect x="11" y="953" width="4" height="1"/><rect x="11" y="965" width="4" height="1"/><rect x="11" y="977" width="4" height="1"/><rect x="11" y="989" width="4" height="1"/><rect x="7" y="1001" width="8" height="1"/><rect x="11" y="1013" width="4" height="1"/><rect x="11" y="1025" width="4" height="1"/></svg>
<span class="t" style="left:.8px;top:276.5px;width:10px;height:10px;font-size:10px;color:#444746;transform:rotate(-90deg);text-align:center">2</span>
<span class="t" style="left:.8px;top:372.5px;width:10px;height:10px;font-size:10px;color:#444746;transform:rotate(-90deg);text-align:center">3</span>
<span class="t" style="left:.8px;top:468.5px;width:10px;height:10px;font-size:10px;color:#444746;transform:rotate(-90deg);text-align:center">4</span>
<span class="t" style="left:.8px;top:564.5px;width:10px;height:10px;font-size:10px;color:#444746;transform:rotate(-90deg);text-align:center">5</span>
<span class="t" style="left:.8px;top:660.5px;width:10px;height:10px;font-size:10px;color:#444746;transform:rotate(-90deg);text-align:center">6</span>
<span class="t" style="left:.8px;top:756.5px;width:10px;height:10px;font-size:10px;color:#444746;transform:rotate(-90deg);text-align:center">7</span>
<span class="t" style="left:.8px;top:852.5px;width:10px;height:10px;font-size:10px;color:#444746;transform:rotate(-90deg);text-align:center">8</span>
<span class="t" style="left:.8px;top:948.5px;width:10px;height:10px;font-size:10px;color:#444746;transform:rotate(-90deg);text-align:center">9</span>
<svg style="left:37.20px;top:232.00px" width="24" height="24" viewBox="0 0 24 24" fill="#444746" ><path d="M20 11H7.83l5.59-5.59L12 4l-8 8 8 8 1.41-1.41L7.83 13H20v-2z"/></svg>
<span class="t" style="left:44.50px;top:288.65px;font-size:14px;color:#444746;letter-spacing:0.536px;-webkit-text-stroke:.3px #444746;">Document tabs</span>
<svg style="left:244.50px;top:287.70px" width="17" height="17" viewBox="0 0 24 24" fill="#444746" ><path d="M19 13h-6v6h-2v-6H5v-2h6V5h2v6h6v2z"/></svg>
<div class="abs" style="left:32px;top:322px;width:248px;height:40px;background:#d3e3fd;border-radius:20px"></div>
<svg style="left:50.50px;top:332.50px" width="19" height="19" viewBox="0 0 24 24" fill="#041e49" ><path d="M19 5v14H5V5h14m0-2H5c-1.1 0-2 .9-2 2v14c0 1.1.9 2 2 2h14c1.1 0 2-.9 2-2V5c0-1.1-.9-2-2-2zM14 17H7v-2h7v2zm3-4H7v-2h10v2zm0-4H7V7h10v2z"/></svg>
<span class="t" style="left:79.20px;top:334.75px;font-size:14px;color:#041e49;letter-spacing:-0.312px;-webkit-text-stroke:.3px #041e49;">Tab 1</span>
<svg style="left:244.00px;top:333.00px" width="18" height="18" viewBox="0 0 24 24" fill="#1f1f1f" ><path d="M12 8c1.1 0 2-.9 2-2s-.9-2-2-2-2 .9-2 2 .9 2 2 2zm0 2c-1.1 0-2 .9-2 2s.9 2 2 2 2-.9 2-2-.9-2-2-2zm0 6c-1.1 0-2 .9-2 2s.9 2 2 2 2-.9 2-2-.9-2-2-2z"/></svg>
<div class="abs" style="left:59px;top:372px;width:2px;height:15.5px;background:#1d3f9c;"></div>
<span class="t" style="left:82.70px;top:373.05px;font-size:14px;color:#2349a6;letter-spacing:0.055px;">Portal Email Automations...</span>
<div id="page" class="abs"></div>
<span class="t" style="left:679.50px;top:226.73px;font-size:10px;color:#222;letter-spacing:-0.440px;">Regards,</span>
<span class="t" style="left:679.50px;top:240.84px;font-size:10px;color:#222;letter-spacing:-0.368px;">Your Organization</span>
<div class="abs" style="left:631px;top:281px;width:624px;height:1px;background:#eef1f3;"></div>
<div class="abs" style="left:679px;top:293px;width:75px;height:26px;background:#fff;border:1px solid #6b6f73;border-radius:13px"></div>
<div class="abs" style="left:760px;top:293px;width:80px;height:26px;background:#fff;border:1px solid #6b6f73;border-radius:13px"></div>
<div class="abs" style="left:846px;top:293px;width:26px;height:26px;background:#fff;border:1px solid #6b6f73;border-radius:13px"></div>
<svg style="left:694px;top:301.500px" width="11" height="9" viewBox="0 0 11 9" fill="none" stroke="#444746" stroke-width="1.300" stroke-linecap="round" stroke-linejoin="round"><path d="M3.800 1 1 3.800 3.800 6.600M1.200 3.800H7.500C9.300 3.800 10.300 5 10.300 6.800V8.300"/></svg>
<svg style="left:770.500px;top:301.500px" width="11" height="9" viewBox="0 0 11 9" fill="none" stroke="#444746" stroke-width="1.300" stroke-linecap="round" stroke-linejoin="round"><path d="M7.200 1 10 3.800 7.200 6.600M9.800 3.800H3.500C1.700 3.800 .7 5 .7 6.800V8.300"/></svg>
<span class="t" style="left:712.50px;top:300.39px;font-size:11px;color:#3c4043;letter-spacing:-0.581px;">Reply</span>
<span class="t" style="left:789.50px;top:300.39px;font-size:11px;color:#3c4043;letter-spacing:-0.391px;">Forward</span>
<svg style="left:852.500px;top:299.500px" width="13" height="13" viewBox="0 0 13 13"><circle cx="6.500" cy="6.500" r="5.700" fill="none" stroke="#444746" stroke-width="1.300"/><circle cx="4.500" cy="5.200" r=".9" fill="#444746"/><circle cx="8.500" cy="5.200" r=".9" fill="#444746"/><path d="M3.600 7.600H9.400C9 9.200 7.900 10 6.500 10S4 9.200 3.600 7.600Z" fill="#444746"/></svg>
<span class="t" style="left:629.50px;top:456.07px;font-size:22.6px;font-family:'Liberation Serif',serif;font-weight:700;color:#000;letter-spacing:-0.488px;-webkit-text-stroke:.15px #000;">Email</span>
<span class="t" style="left:692.00px;top:456.07px;font-size:22.6px;font-family:'Liberation Serif',serif;font-weight:700;color:#000;letter-spacing:0.582px;-webkit-text-stroke:.15px #000;">Templates</span>
<span class="t" style="left:801.80px;top:456.07px;font-size:22.6px;font-family:'Liberation Serif',serif;font-weight:700;color:#000;letter-spacing:0.426px;-webkit-text-stroke:.15px #000;">related</span>
<span class="t" style="left:878.00px;top:456.07px;font-size:22.6px;font-family:'Liberation Serif',serif;font-weight:700;color:#000;letter-spacing:1.172px;-webkit-text-stroke:.15px #000;">to</span>
<span class="t" style="left:905.00px;top:456.07px;font-size:22.6px;font-family:'Liberation Serif',serif;font-weight:700;color:#000;letter-spacing:0.543px;-webkit-text-stroke:.15px #000;">this</span>
<span class="t" style="left:949.40px;top:456.07px;font-size:22.6px;font-family:'Liberation Serif',serif;font-weight:700;color:#000;letter-spacing:0.290px;-webkit-text-stroke:.15px #000;">automation:</span>
<span class="t" style="left:627.00px;top:532.33px;font-size:21.1px;font-family:'Liberation Serif',serif;color:#000;-webkit-text-stroke:.3px #000;">1</span>
<span class="t" style="left:637.20px;top:532.33px;font-size:21.1px;font-family:'Liberation Serif',serif;color:#000;-webkit-text-stroke:.3px #000;">.</span>
<span class="t" style="left:646.60px;top:532.33px;font-size:21.1px;font-family:'Liberation Serif',serif;color:#000;letter-spacing:0.881px;-webkit-text-stroke:.3px #000;">Stage</span>
<span class="t" style="left:703.70px;top:532.33px;font-size:21.1px;font-family:'Liberation Serif',serif;color:#000;letter-spacing:0.892px;-webkit-text-stroke:.3px #000;">Transition</span>
<span class="t" style="left:805.80px;top:532.33px;font-size:21.1px;font-family:'Liberation Serif',serif;color:#000;letter-spacing:0.000px;-webkit-text-stroke:.3px #000;">-</span>
<span class="t" style="left:818.80px;top:532.33px;font-size:21.1px;font-family:'Liberation Serif',serif;color:#000;letter-spacing:-0.064px;-webkit-text-stroke:.3px #000;">Adult:</span>
<div class="abs" style="left:880.5px;top:530.5px;width:1px;height:25.5px;background:#6a6a6a;"></div>
<div class="abs" style="left:1908px;top:707px;width:7.5px;height:44px;background:#dadce0;border-radius:4px"></div>
<div class="abs" style="left:1895.5px;top:984px;width:40px;height:40px;background:#fff;border-radius:20px;box-shadow:0 1px 3px rgba(60,64,67,.35),0 1px 2px rgba(60,64,67,.2)"></div>
<svg style="left:1906px;top:998px" width="8" height="12" viewBox="0 0 8 12" fill="none" stroke="#444746" stroke-width="1.800"><path d="M6.500 1.200 1.700 6 6.500 10.800"/></svg>
<svg style="left:1913px;top:622px" width="12" height="19" viewBox="0 0 12 19"><path d="M.5.800V15.500L4 12.300 6.300 17.600 8.600 16.600 6.300 11.400H11.200Z" fill="#fff" stroke="#000" stroke-width="1"/></svg>
<div class="abs" style="left:0px;top:1031px;width:1920px;height:1px;background:#fff;"></div>
<!-- ===== Taskbar ===== -->
<div id="taskbar" class="abs"></div>
<svg style="left:18px;top:1042px" width="26" height="24" viewBox="0 0 26 24">
<defs><linearGradient id="mo" x1="0" y1="0" x2="1" y2="1"><stop offset="0" stop-color="#ffd04a"/><stop offset="1" stop-color="#f08a1c"/></linearGradient>
<linearGradient id="cl" x1="0" y1="0" x2="0" y2="1"><stop offset="0" stop-color="#e4f0ff"/><stop offset="1" stop-color="#8fb6ee"/></linearGradient></defs>
<mask id="mk"><rect width="26" height="24" fill="#fff"/><circle cx="9" cy="8" r="8.300" fill="#000"/></mask><circle cx="13.800" cy="12.600" r="10.600" fill="url(#mo)" mask="url(#mk)"/>
<path d="M2.500 9.500A2.600 2.600 0 0 1 3.200 4.400 3.600 3.600 0 0 1 9.900 3.600 3 3 0 0 1 12 9.500Z" fill="url(#cl)"/>
<path d="M12.500 22.500A2.700 2.700 0 0 1 13.200 17.200 3.800 3.800 0 0 1 20.300 16.300 3.200 3.200 0 0 1 22.500 22.500Z" fill="url(#cl)"/>
</svg>
<span class="t" style="left:50.80px;top:1041.84px;font-size:12px;color:#fff;letter-spacing:-0.828px;">76°F</span>
<span class="t" style="left:50.00px;top:1057.24px;font-size:12px;color:#d2d2d2;letter-spacing:0.041px;">Partly cloudy</span>
<svg style="left:484.700px;top:1044.700px" width="23.600" height="23.600" viewBox="0 0 24 24"><defs><linearGradient id="wn" x1="0" y1="0" x2="1" y2="1"><stop offset="0" stop-color="#7fd6fb"/><stop offset="1" stop-color="#0f9ae6"/></linearGradient></defs>
<path d="M0 0H11.300V11.300H0ZM12.700 0H24V11.300H12.700ZM0 12.700H11.300V24H0ZM12.700 12.700H24V24H12.700Z" fill="url(#wn)"/></svg>
<div class="abs" style="left:521px;top:1040px;width:220px;height:32px;background:#373737;border-radius:16px;border:1px solid #4b4b4b"></div>
<svg style="left:533px;top:1048.500px" width="15" height="15" viewBox="0 0 15 15" fill="none" stroke="#e0e0e0" stroke-width="1.500" stroke-linecap="round"><circle cx="6.200" cy="6.200" r="5"/><path d="M10 10 13.800 13.800"/></svg>
<span class="t" style="left:558.00px;top:1048.95px;font-size:14px;color:#dcdcdc;letter-spacing:-0.632px;">Search</span>
<svg style="left:690px;top:1041px" width="46" height="30" viewBox="0 0 46 30"><defs><radialGradient id="mn" cx=".4" cy=".35" r=".7"><stop offset="0" stop-color="#ffe08a"/><stop offset="1" stop-color="#f2a93a"/></radialGradient>
<linearGradient id="gd" x1="0" y1="0" x2="1" y2="0"><stop offset="0" stop-color="#f4f6ff"/><stop offset="1" stop-color="#2a3f9c"/></linearGradient></defs>
<circle cx="21.700" cy="12.300" r="11.500" fill="url(#mn)"/><circle cx="18" cy="9" r="2" fill="#e9a640" opacity=".6"/><circle cx="25" cy="15" r="1.500" fill="#e08a3a" opacity=".6"/><circle cx="17" cy="17" r="1.300" fill="#e08a3a" opacity=".6"/>
<path d="M2 27 4 17 6 23 8 15 10 22 12 18 14 27Z" fill="#3556c8"/><path d="M27 27 29 19 31 23 33 14 35 21 37 16 39 22 41 19 43 27Z" fill="#3556c8"/>
<path d="M1 28C8 23 20 22 30 25 36 26.500 41 27.500 44 28Z" fill="url(#gd)"/></svg>
<div class="abs" style="left:753.5px;top:1051px;width:18px;height:16px;background:#6b6b6b;border-radius:2.500px"></div>
<div class="abs" style="left:759.5px;top:1045px;width:18px;height:16px;background:#f3f3f3;border-radius:2.500px;box-shadow:-1px 1px 0 rgba(120,120,120,.8)"></div>
<svg style="left:796.500px;top:1044.500px" width="24" height="23" viewBox="0 0 24 23"><defs><linearGradient id="tm" x1="0" y1="0" x2="1" y2="1"><stop offset="0" stop-color="#8a90f0"/><stop offset="1" stop-color="#4e52b8"/></linearGradient></defs>
<path d="M12.500 0A11 10.500 0 1 1 7 19.800L1 22.500 2.300 16A10.500 10.500 0 0 1 12.500 0Z" fill="url(#tm)"/><rect x="6" y="7" width="9" height="7.500" rx="1.500" fill="#fff"/><path d="M15.500 10 19 7.500V14L15.500 11.500Z" fill="#fff"/></svg>
<svg style="left:840.500px;top:1045px" width="25" height="22" viewBox="0 0 25 22"><path d="M1.500 0H8L10.500 2.500H23.500A1.500 1.500 0 0 1 25 4V6H0V1.500A1.500 1.500 0 0 1 1.500 0Z" fill="#e8a317"/><rect x="0" y="4" width="25" height="17.500" rx="1.500" fill="#ffd75e"/><path d="M5.500 14.500A1.500 1.500 0 0 1 7 13H18A1.500 1.500 0 0 1 19.500 14.500V21.500H5.500Z" fill="#1b84d6"/><rect x="8" y="16" width="9" height="1.700" rx=".8" fill="#0f5fa8"/></svg>
<svg style="left:884.500px;top:1043.500px" width="25" height="25" viewBox="0 0 25 25"><defs>
<linearGradient id="e1" x1="0" y1="0" x2="1" y2="0"><stop offset="0" stop-color="#38b4f2"/><stop offset=".5" stop-color="#2ec4c6"/><stop offset="1" stop-color="#66d84e"/></linearGradient>
<linearGradient id="e2" x1="0" y1="0" x2=".6" y2="1"><stop offset="0" stop-color="#2b9be6"/><stop offset="1" stop-color="#0b55a2"/></linearGradient>
<linearGradient id="e3" x1="0" y1="0" x2="1" y2="1"><stop offset="0" stop-color="#1470c4"/><stop offset="1" stop-color="#0f4c94"/></linearGradient></defs>
<path d="M.3 12.500A12.200 12.200 0 0 0 22.700 19.300C19 21.500 13.500 21.300 11.300 17.300 10 14.500 10.400 12 11 10.800L6 6 1 8Z" fill="url(#e2)"/>
<path d="M9.800 9.500C8 12 8.300 16.500 10.500 19.200 13.500 22.500 19.500 22.300 22.700 19.300 19.500 20.600 14.800 19.600 12.900 15.800 12.200 14 12.300 12.600 12.600 12Z" fill="url(#e3)"/>
<path d="M.4 10.800A12.200 12.200 0 0 1 24.700 12.300C24.700 15 22.500 16.700 19.500 16.700 16.500 16.700 14.300 15.900 13.600 14.300 14.600 13.300 14.200 10.800 12 10.300 9.500 9.800 6.800 8.300 3.800 9 2.300 9.400 1 10.200.4 10.800Z" fill="url(#e1)"/>
</svg>
<svg style="left:929px;top:1043.500px" width="24" height="25" viewBox="0 0 24 25"><defs>
<linearGradient id="ff" x1=".7" y1="0" x2=".35" y2="1"><stop offset="0" stop-color="#fff45e"/><stop offset=".3" stop-color="#ffbd2e"/><stop offset=".6" stop-color="#ff7a20"/><stop offset=".85" stop-color="#ff3650"/><stop offset="1" stop-color="#e81686"/></linearGradient>
<linearGradient id="fp" x1="0" y1="0" x2="0" y2="1"><stop offset="0" stop-color="#b14dff"/><stop offset="1" stop-color="#5457e6"/></linearGradient>
<linearGradient id="fh" x1="0" y1="0" x2="1" y2="1"><stop offset="0" stop-color="#ff9a1f"/><stop offset="1" stop-color="#ff5a2a"/></linearGradient></defs>
<path d="M15.400.400C17.500 2.200 19.500 4.300 20.300 6.300 21.200 5.900 21.500 5.500 21.700 5.200 23 7.500 23.500 10 23.400 12.800A11.500 11 0 0 1 .6 13.500C.5 10 1.400 7 2.700 4.700 3 5.300 3.300 5.800 3.800 6.100 4 5.300 4.300 4.700 4.700 4.200 5.200 5 5.800 5.600 6.500 5.900 6.800 5.200 7.200 4.700 7.600 4.400 8.300 5.200 9.500 5.800 11 5.800 11.500 3.500 13.200 1.500 15.400.400Z" fill="url(#ff)"/>
<circle cx="11.700" cy="13.200" r="4.600" fill="url(#fp)"/>
<path d="M3 8.500C4.500 7.500 6.500 7.700 8 8.600 9.300 8 11 8 12.200 8.600 10.300 9 8.700 10.400 8.300 12.200 7.900 14.300 9 16.300 10.800 17.200 8.500 17.400 6 16.200 4.600 14 3.600 12.300 3 10.300 3 8.500Z" fill="url(#fh)"/>
<path d="M9.500 9.800C10.500 9.200 11.800 9.200 12.600 9.700 11.600 9.900 10.800 10.300 10.300 11Z" fill="#ffe9a8"/>
</svg>
<div class="abs" style="left:965px;top:1036px;width:39px;height:40px;background:#2c2c2c;border-radius:4px;border:1px solid #3a3a3a"></div>
<svg style="left:972.6px;top:1044px" width="24" height="24" viewBox="0 0 24 24">
<circle cx="12" cy="12" r="11.600" fill="#34a853"/><path d="M12 12 22.500 7.700A12 12 0 0 1 11.400 23.600Z" fill="#fbbc05"/><circle cx="12" cy="12" r="6.500" fill="#fff"/>
<path d="M12 0C8.210 0 4.831 1.757 2.632 4.501l3.953 6.848A5.454 5.454 0 0 1 12 6.545h10.691A12 12 0 0 0 12 0z" fill="#ea4335"/>
<path d="M1.931 5.470A11.943 11.943 0 0 0 0 12c0 6.012 4.420 10.991 10.189 11.864l3.953-6.847a5.450 5.450 0 0 1-6.865-2.290z" fill="#34a853"/>
<path d="M15.273 7.636a5.446 5.446 0 0 1 1.450 7.090l.002.001h-.002l-5.344 9.257c.206.010.413.016.621.016 6.627 0 12-5.373 12-12 0-1.540-.290-3.011-.818-4.364z" fill="#fbbc05"/>
<circle cx="12" cy="12" r="4.364" fill="#4285f4"/></svg>
<svg style="left:986.5px;top:1039px" width="15" height="15" viewBox="0 0 32 32"><defs><clipPath id="av3"><circle cx="16" cy="16" r="16"/></clipPath></defs><g clip-path="url(#av3)"><rect width="32" height="32" fill="#dcdcd9"/><path d="M2 32C2 26.500 7 24 11.500 23L16 27.500 20.500 23C25 24 30 26.500 30 32Z" fill="#a6cbe8"/><path d="M12.300 20H19.700V23.500L16 28.500 12.300 23.500Z" fill="#b5815c"/><ellipse cx="16.300" cy="13.800" rx="6.600" ry="8.200" fill="#c08a63"/><path d="M9.400 13.500C8 6 11.500 .8 16.500 .8S25 5.500 23.400 13.500C22.800 10.500 22 8.800 20.500 8 18 8.800 13.500 8.800 12 8 10.500 9 9.900 11 9.400 13.500Z" fill="#17120f"/><path d="M9.800 14.500C10 20.500 12.800 23.300 16.300 23.300S22.600 20.500 22.800 14.500C21.800 17.200 20.500 18 19 18 17.500 17.200 15 17.200 13.600 18 12 18 10.800 17.200 9.800 14.500Z" fill="#231915"/><path d="M14.300 19.600H18.300" stroke="#a87455" stroke-width=".8"/></g></svg>
<div class="abs" style="left:977px;top:1072px;width:16px;height:3px;background:#4cc2ff;border-radius:1.500px"></div>
<svg style="left:1017px;top:1044px" width="24" height="24" viewBox="0 0 24 24">
<circle cx="12" cy="12" r="11.600" fill="#34a853"/><path d="M12 12 22.500 7.700A12 12 0 0 1 11.400 23.600Z" fill="#fbbc05"/><circle cx="12" cy="12" r="6.500" fill="#fff"/>
<path d="M12 0C8.210 0 4.831 1.757 2.632 4.501l3.953 6.848A5.454 5.454 0 0 1 12 6.545h10.691A12 12 0 0 0 12 0z" fill="#ea4335"/>
<path d="M1.931 5.470A11.943 11.943 0 0 0 0 12c0 6.012 4.420 10.991 10.189 11.864l3.953-6.847a5.450 5.450 0 0 1-6.865-2.290z" fill="#34a853"/>
<path d="M15.273 7.636a5.446 5.446 0 0 1 1.450 7.090l.002.001h-.002l-5.344 9.257c.206.010.413.016.621.016 6.627 0 12-5.373 12-12 0-1.540-.290-3.011-.818-4.364z" fill="#fbbc05"/>
<circle cx="12" cy="12" r="4.364" fill="#4285f4"/></svg>
<div class="abs" style="left:1030px;top:1043.5px;width:11px;height:11px;background:#2b2b2b;border-radius:2px;transform:rotate(-20deg);border:1px solid #555"></div>
<svg style="left:1060.8px;top:1044px" width="24" height="24" viewBox="0 0 24 24">
<circle cx="12" cy="12" r="11.600" fill="#34a853"/><path d="M12 12 22.500 7.700A12 12 0 0 1 11.400 23.600Z" fill="#fbbc05"/><circle cx="12" cy="12" r="6.500" fill="#fff"/>
<path d="M12 0C8.210 0 4.831 1.757 2.632 4.501l3.953 6.848A5.454 5.454 0 0 1 12 6.545h10.691A12 12 0 0 0 12 0z" fill="#ea4335"/>
<path d="M1.931 5.470A11.943 11.943 0 0 0 0 12c0 6.012 4.420 10.991 10.189 11.864l3.953-6.847a5.450 5.450 0 0 1-6.865-2.290z" fill="#34a853"/>
<path d="M15.273 7.636a5.446 5.446 0 0 1 1.450 7.090l.002.001h-.002l-5.344 9.257c.206.010.413.016.621.016 6.627 0 12-5.373 12-12 0-1.540-.290-3.011-.818-4.364z" fill="#fbbc05"/>
<circle cx="12" cy="12" r="4.364" fill="#4285f4"/></svg>
<div class="abs" style="left:1074px;top:1039px;width:16px;height:16px;background:#d81b60;border-radius:8px"></div>
<span class="t" style="left:1079.30px;top:1042.26px;font-size:9.5px;color:#fff;letter-spacing:0.000px;">S</span>
<svg style="left:1105px;top:1047px" width="24.500" height="18.500" viewBox="0 0 24.500 18.500"><rect width="24.500" height="18.500" rx="1" fill="#cfe6f7"/><rect x="1" y="1" width="22.500" height="15.500" fill="#e9f4fc"/><path d="M1 16.500V12L3.500 10 5.500 12 7.500 4.500 9.500 10 11 7.500 12.500 12 15 10.500 17 5.500 19 11.500 21 10 23.500 12.500V16.500Z" fill="#5aa7de"/></svg>
<svg style="left:1149px;top:1046px" width="23" height="19" viewBox="0 0 23 19"><rect width="23" height="19" fill="#9a9a9a"/><rect x=".8" y="2.800" width="21.400" height="15.400" fill="#000"/><rect x=".8" y=".8" width="21.400" height="2" fill="#d8d8d8"/><path d="M3 6.500H6M7 6.500H9.500M3 8.500H5" stroke="#ddd" stroke-width="1.200"/><path d="M11 8.800H17" stroke="#fff" stroke-width="1.200"/></svg>
<svg style="left:1192.500px;top:1043.500px" width="25" height="25" viewBox="0 0 25 25"><path d="M6 1.500C2.500 2 1 5 1.500 9 2 12.500 3.500 15.500 5.500 16 7 16.300 7.500 15 8 14.500V19C8 22 9.500 24 12 24S15.500 22 15.500 19.500V15.500C17 16.500 19.500 16.500 21.500 15.500 20 15.500 19 15 19 14 21.500 11.500 23.500 7 22.500 4 21.500 1.500 18 .8 15.500 1.800 13.500 1 8.500 1 6 1.500Z" fill="#336791" stroke="#e8eef5" stroke-width="1.300" stroke-linejoin="round"/><path d="M15.500 2V14M8 3.500C9.500 6 9.500 11 8 14.500" fill="none" stroke="#e8eef5" stroke-width="1"/><circle cx="17.500" cy="6.500" r=".8" fill="#fff"/><circle cx="6.500" cy="6.500" r=".8" fill="#fff"/></svg>
<svg style="left:1236px;top:1043.500px" width="25.500" height="25" viewBox="0 0 25.500 25"><path d="M18.500 0 25.500 3V22L18.500 25Z" fill="#1f9cf0"/><path d="M18.500 0 5 12.500 18.500 25 19 18.500 11 12.500 19 6.500Z" fill="#0b7bd0"/><path d="M0 8 2.500 6 18.500 18.500V25Z" fill="#0a68b4"/><path d="M0 17 2.500 19 18.500 6.500V0Z" fill="#2aaaf5"/></svg>
<svg style="left:1280px;top:1043.500px" width="25.500" height="25" viewBox="0 0 25.500 25"><defs><linearGradient id="pc" x1="0" y1="0" x2="1" y2="1"><stop offset="0" stop-color="#21d789"/><stop offset=".5" stop-color="#1fc8d8"/><stop offset="1" stop-color="#fcf84a"/></linearGradient></defs><path d="M1 2 17 0 25.500 9 23 21 12 25 0 19Z" fill="url(#pc)"/><path d="M17 0 25.500 9 23 21 19 10Z" fill="#fcf84a"/><path d="M0 19 12 25 6 14Z" fill="#21d789"/><rect x="4.500" y="4.500" width="16" height="16" fill="#000"/><rect x="6.500" y="17" width="6" height="1.200" fill="#fff"/></svg>
<span class="t" style="left:1286.30px;top:1049.50px;font-size:8.5px;font-weight:700;color:#fff;letter-spacing:-0.312px;">PC</span>
<svg style="left:1324px;top:1043.500px" width="26" height="25" viewBox="0 0 26 25"><g stroke="#1f1f1f" stroke-width=".5"><path d="M13 0 19 6 13 12 7 6Z" fill="#ef6a64"/><path d="M20 6.500 26 12.500 20 18.500 14 12.500Z" fill="#71c45b"/><path d="M13 13 19 19 13 25 7 19Z" fill="#f3d96b"/><path d="M6 6.500 12 12.500 6 18.500 0 12.500Z" fill="#6c9cf0"/></g><path d="M10 5 17 12M14.500 9.500 12.500 18" stroke="#1a1a1a" stroke-width="1.400" fill="none"/><circle cx="10" cy="5" r="1.500" fill="#1a1a1a"/><circle cx="17.500" cy="12.500" r="1.500" fill="#1a1a1a"/><circle cx="12.500" cy="18.500" r="1.500" fill="#1a1a1a"/></svg>
<div class="abs" style="left:1369px;top:1043.7px;width:24.5px;height:24.5px;background:#fff;"></div>
<svg style="left:1374px;top:1047px" width="14" height="11" viewBox="0 0 14 11"><rect x=".5" y=".5" width="13" height="8" rx="1" fill="#e6f3fb" stroke="#3a8fcf" stroke-width="1"/><path d="M3 4.500 5 6.500 8 3" stroke="#36a852" stroke-width="1.200" fill="none"/><rect x="5" y="9" width="4" height="1.500" fill="#3a8fcf"/></svg>
<span class="t" style="left:1373.50px;top:1059.69px;font-size:4.5px;color:#4a6a8a;letter-spacing:-0.128px;">TaskPro</span>
<svg style="left:1415px;top:1043.500px" width="20.500" height="25" viewBox="0 0 20.500 25"><defs><linearGradient id="lw" x1="0" y1="0" x2="0" y2="1"><stop offset="0" stop-color="#2a86e0"/><stop offset="1" stop-color="#0d4fa8"/></linearGradient></defs><path d="M2 0H14.500L20.500 6V23A2 2 0 0 1 18.500 25H2A2 2 0 0 1 0 23V2A2 2 0 0 1 2 0Z" fill="url(#lw)"/><path d="M14.500 0 20.500 6H14.500Z" fill="#7ec0f7"/><rect x="3.500" y="9.500" width="6" height="1.500" fill="#fff"/><rect x="11" y="9" width="5.500" height="4" fill="#cfe6fb"/><rect x="3.500" y="13" width="6" height="1.500" fill="#fff"/><rect x="3.500" y="16.500" width="13" height="1.500" fill="#fff"/><rect x="3.500" y="19.800" width="9" height="1.500" fill="#fff"/></svg>
<div class="abs" style="left:849.8px;top:1072.4px;width:6.4px;height:2.4px;background:#8c8c8c;border-radius:1.200px"></div>
<div class="abs" style="left:1069.8px;top:1072.4px;width:6.4px;height:2.4px;background:#8c8c8c;border-radius:1.200px"></div>
<div class="abs" style="left:1245.6px;top:1072.4px;width:6.4px;height:2.4px;background:#8c8c8c;border-radius:1.200px"></div>
<div class="abs" style="left:1377.8px;top:1072.4px;width:6.4px;height:2.4px;background:#8c8c8c;border-radius:1.200px"></div>
<div class="abs" style="left:1421.8px;top:1072.4px;width:6.4px;height:2.4px;background:#8c8c8c;border-radius:1.200px"></div>
<svg style="left:1671.500px;top:1052.500px" width="11.500" height="7" viewBox="0 0 11.500 7" fill="none" stroke="#fff" stroke-linecap="round" stroke-linejoin="round" stroke-width="1.400"><path d="M.8 6.200 5.750 1.200 10.700 6.200"/></svg>
<svg style="left:1701px;top:1049.500px" width="16.500" height="11.500" viewBox="0 0 16.500 11.500"><defs><linearGradient id="od" x1="0" y1="0" x2="1" y2="1"><stop offset="0" stop-color="#fff"/><stop offset="1" stop-color="#a8a8a8"/></linearGradient></defs><path d="M3.500 11.500A3.300 3.300 0 0 1 3 5 4.800 4.800 0 0 1 12 3.800 3.900 3.900 0 0 1 13 11.500Z" fill="url(#od)"/><path d="M6 11.500 11 5.500 13.500 7.500 9.500 11.500Z" fill="#8a8a8a" opacity=".6"/></svg>
<svg style="left:1733px;top:1050px" width="16" height="11" viewBox="0 0 16 11" fill="none" stroke="#fff" stroke-linecap="round" stroke-linejoin="round" stroke-width="1.100"><rect x=".6" y=".6" width="14.800" height="9.800" rx="1.500"/><path d="M3.200 3.500H3.300M5.700 3.500H5.800M8.200 3.500H8.300M10.700 3.500H10.800M12.800 3.500H12.900M3.200 5.700H3.300M5.700 5.700H5.800M8.200 5.700H8.300M10.700 5.700H10.800M12.800 5.700H12.900M4.500 8H11.500"/></svg>
<svg style="left:1765px;top:1049.500px" width="16.500" height="12" viewBox="0 0 16.500 12" fill="none" stroke="#fff" stroke-linecap="round" stroke-linejoin="round" stroke-width="1.300"><path d="M.8 4.300A10.500 10.500 0 0 1 15.700 4.300M3.200 6.800A7.200 7.200 0 0 1 13.300 6.800M5.700 9.200A3.700 3.700 0 0 1 10.800 9.200"/><circle cx="8.250" cy="10.800" r=".9" fill="#fff" stroke="none"/></svg>
<svg style="left:1788.500px;top:1049px" width="17" height="13" viewBox="0 0 17 13" fill="none" stroke="#fff" stroke-linecap="round" stroke-linejoin="round" stroke-width="1.100"><path d="M.8 4.500H3.200L6.500 1.500V11.500L3.200 8.500H.8Z"/><path d="M9 4.500A3 3 0 0 1 9 8.500M11.200 2.700A5.500 5.500 0 0 1 11.200 10.300M13.500 1A8 8 0 0 1 13.500 12"/></svg>
<span class="t" style="left:1834.00px;top:1041.74px;font-size:12px;color:#fff;letter-spacing:-0.401px;">5:21 PM</span>
<span class="t" style="left:1821.90px;top:1058.04px;font-size:12px;color:#fff;letter-spacing:0.126px;">12/4/2025</span>
<svg style="left:1885px;top:1048.500px" width="14.500" height="16" viewBox="0 0 14.500 16" fill="#7bdcf7"><path d="M7.250 0A4.800 4.800 0 0 1 12 4.800V9.500L14 12.300C14.300 12.800 14 13.300 13.500 13.300H1C.5 13.300.2 12.800.5 12.300L2.500 9.500V4.800A4.800 4.800 0 0 1 7.250 0Z"/><path d="M5.200 14.300H9.300A2.050 2 0 0 1 5.200 14.300Z"/></svg>
</body>
</html>
